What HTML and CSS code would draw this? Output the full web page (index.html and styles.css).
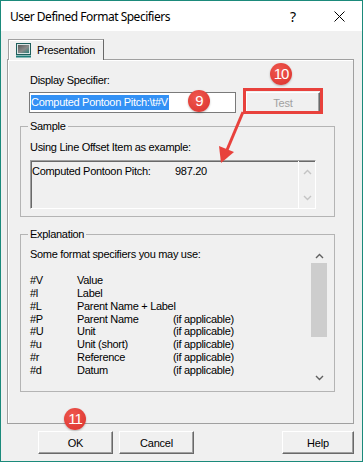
FILE: index.html
```html
<!DOCTYPE html>
<html lang="en">
<head>
<meta charset="utf-8"/>
<title>User Defined Format Specifiers</title>
<link rel="stylesheet" href="styles.css">
</head>
<body>
<div class="window">
<div class="titlebar">
<span class="title">User Defined Format Specifiers</span>
<span class="caption-btn">?</span>
<span class="caption-btn"><svg width="11" height="11" viewBox="0 0 11 11"><path d="M0.5 0.5 L10.5 10.5 M10.5 0.5 L0.5 10.5" stroke="#000" stroke-width="1" fill="none"/></svg></span>
</div>
<div class="tabs">
<div class="tab">
<svg class="tab-icon" width="15" height="15" viewBox="0 0 15 15">
<defs><linearGradient id="scr" x1="0" y1="0" x2="1" y2="1"><stop offset="0" stop-color="#5a5a5a"/><stop offset="0.55" stop-color="#8a8a8a"/><stop offset="1" stop-color="#2f7f78"/></linearGradient></defs>
<rect x="0.5" y="0.5" width="14" height="11" fill="#d8e4e4" stroke="#1e5e5c"/>
<rect x="2" y="2" width="11" height="8" fill="url(#scr)"/>
<rect x="0" y="12.5" width="15" height="2" fill="#1f7f7a"/>
</svg>
<span>Presentation</span>
</div>
</div>
<div class="panel">
<div class="field-label">Display Specifier:</div>
<div class="spec-row">
<div class="spec-input"><span class="sel">Computed Pontoon Pitch:\t#V</span></div>
<button class="btn btn-test" disabled>Test</button>
</div>
<fieldset class="group group-sample">
<legend>Sample</legend>
<div class="hint">Using Line Offset Item as example:</div>
<div class="sample-box">
<div class="sample-text"><span class="sample-name">Computed Pontoon Pitch:</span><span>987.20</span></div>
<div class="scroll scroll-off">
<svg width="9" height="6" viewBox="0 0 9 6"><path d="M1 5 L4.5 1.5 L8 5" stroke="#c4c4c4" stroke-width="1.4" fill="none"/></svg>
<svg width="9" height="6" viewBox="0 0 9 6"><path d="M1 1 L4.5 4.5 L8 1" stroke="#c4c4c4" stroke-width="1.4" fill="none"/></svg>
</div>
</div>
</fieldset>
<fieldset class="group group-explain">
<legend>Explanation</legend>
<div class="explain-box">
<div class="explain-text">
<div class="intro">Some format specifiers you may use:</div>
<div class="spec-list">
<span>#V</span><span>Value</span><span></span>
<span>#l</span><span>Label</span><span></span>
<span>#L</span><span>Parent Name + Label</span><span></span>
<span>#P</span><span>Parent Name</span><span>(if applicable)</span>
<span>#U</span><span>Unit</span><span>(if applicable)</span>
<span>#u</span><span>Unit (short)</span><span>(if applicable)</span>
<span>#r</span><span>Reference</span><span>(if applicable)</span>
<span>#d</span><span>Datum</span><span>(if applicable)</span>
</div>
</div>
<div class="scroll scroll-on">
<svg width="9" height="6" viewBox="0 0 9 6"><path d="M1 5 L4.5 1.5 L8 5" stroke="#606060" stroke-width="1.4" fill="none"/></svg>
<div class="thumb"></div>
<svg width="9" height="6" viewBox="0 0 9 6"><path d="M1 1 L4.5 4.5 L8 1" stroke="#606060" stroke-width="1.4" fill="none"/></svg>
</div>
</div>
</fieldset>
</div>
<div class="buttons">
<button class="btn btn-ok">OK</button>
<button class="btn btn-cancel">Cancel</button>
<button class="btn btn-help">Help</button>
</div>
<div class="mark mark-9">9</div>
<div class="mark mark-10">10</div>
<div class="mark mark-11">11</div>
<div class="focus-box"></div>
<svg class="arrow" width="40" height="60" viewBox="210 108 40 60">
<line x1="243" y1="112" x2="227" y2="150" stroke="#e8413c" stroke-width="3"/>
<polygon points="221,163 234,152 219,146" fill="#e8413c"/>
</svg>
</div>
</body>
</html>
```
FILE: styles.css
```css
body {
    margin: 0;
    font-family: "Liberation Sans", Arial, sans-serif;
    font-size: 11px;
    letter-spacing: -0.3px;
    color: #000;
}
.window {
    position: relative;
    width: 363px;
    height: 462px;
    box-sizing: border-box;
    border: 1px solid #1b8a7b;
    background: #f0f0f0;
}
.titlebar {
    height: 30px;
    background: #fff;
    display: flex;
    align-items: center;
}
.title {
    flex: 1;
    margin-left: 9px;
    font-family: "Noto Sans", sans-serif;
    font-size: 12px;
    letter-spacing: -0.5px;
}
.caption-btn {
    width: 46px;
    height: 30px;
    display: flex;
    justify-content: center;
    align-items: center;
    font-family: "Noto Sans", sans-serif;
    font-size: 14px;
}
.tabs {
    padding: 8px 0 0 7px;
}
.tab {
    position: relative;
    z-index: 1;
    width: 96px;
    height: 21px;
    margin-bottom: -1px;
    box-sizing: border-box;
    display: flex;
    align-items: center;
    padding-left: 7px;
    background: #f0f0f0;
    border: 1px solid #a0a0a0;
    border-bottom: none;
    border-right-color: #696969;
    box-shadow: inset 1px 1px #fff;
}
.tab-icon {
    margin-right: 6px;
}
.panel {
    margin-left: 6px;
    width: 347px;
    height: 365px;
    box-sizing: border-box;
    border: 1px solid #a0a0a0;
    box-shadow: inset 1px 1px #fff;
}
.field-label {
    margin: 14px 0 0 22px;
    line-height: 13px;
}
.spec-row {
    display: flex;
    margin-top: 5px;
    padding-left: 21px;
}
.spec-input {
    width: 207px;
    height: 21px;
    box-sizing: border-box;
    background: #fff;
    border: 1px solid #7a7a7a;
    padding: 2px 0 0 1px;
    overflow: hidden;
    white-space: nowrap;
}
.sel {
    display: inline-block;
    background: #3391f5;
    color: #fff;
    line-height: 15px;
    padding-right: 1px;
}
.btn {
    font-family: "Liberation Sans", Arial, sans-serif;
    font-size: 11px;
    letter-spacing: -0.2px;
    color: #000;
    height: 23px;
    box-sizing: border-box;
    background: #f0f0f0;
    border: 1px solid;
    border-color: #fff #696969 #696969 #fff;
    box-shadow: inset -1px -1px #a0a0a0;
    padding: 0;
}
.btn-test {
    margin-left: 10px;
    width: 74px;
    height: 21px;
    color: #a0a0a0;
}
.group {
    margin: 0 0 0 12px;
    width: 315px;
    box-sizing: border-box;
    border: 1px solid #b4b4b4;
    padding: 0;
    min-inline-size: 0;
}
.group legend {
    margin-left: 7px;
    padding: 0 2px;
    line-height: 13px;
}
.group-sample {
    margin-top: 7px;
    padding: 7px 0 7px 0;
}
.hint {
    margin-left: 9px;
    line-height: 14px;
}
.sample-box {
    display: flex;
    margin: 6px 0 0 9px;
    width: 286px;
    height: 49px;
    box-sizing: border-box;
    border: 1px solid;
    border-color: #a0a0a0 #fff #fff #a0a0a0;
    box-shadow: inset 1px 1px #696969;
}
.sample-text {
    flex: 1;
    display: flex;
    padding: 4px 0 0 1px;
    line-height: 13px;
}
.sample-name {
    width: 143px;
}
.scroll {
    width: 16px;
    display: flex;
    flex-direction: column;
    align-items: center;
}
.scroll-off {
    border-left: 1px solid #fff;
    justify-content: space-between;
    padding: 8px 0 7px;
}
.group-explain {
    margin-top: 11px;
    padding: 2px 0 5px 0;
}
.explain-box {
    display: flex;
    margin-left: 7px;
    width: 299px;
    height: 143px;
}
.explain-text {
    flex: 1;
    padding: 5px 0 0 2px;
    line-height: 12.9px;
    white-space: nowrap;
}
.intro {
    margin-bottom: 12.9px;
}
.spec-list {
    display: grid;
    grid-template-columns: 47px 96px auto;
}
.scroll-on {
    padding-top: 10px;
}
.thumb {
    width: 16px;
    height: 74px;
    margin-top: 4px;
    background: #cdcdcd;
}
.scroll-on svg:last-child {
    margin-top: 38px;
}
.buttons {
    display: flex;
    margin-top: 7px;
    padding: 0 8px 0 37px;
}
.btn-ok,
.btn-cancel {
    width: 75px;
}
.btn-cancel {
    margin-left: 6px;
}
.btn-help {
    width: 72px;
    margin-left: auto;
}
.mark {
    position: absolute;
    width: 22px;
    height: 22px;
    border-radius: 50%;
    background: radial-gradient(circle at 40% 35%, #f0594f, #d9302c);
    color: #fff;
    font-size: 15px;
    line-height: 22px;
    text-align: center;
    letter-spacing: -1px;
    box-shadow: 0 1px 2px rgba(0, 0, 0, 0.25);
}
.mark-9 {
    left: 187px;
    top: 89px;
}
.mark-10 {
    left: 269px;
    top: 62px;
}
.mark-11 {
    left: 63px;
    top: 407px;
}
.focus-box {
    position: absolute;
    left: 242px;
    top: 87px;
    width: 80px;
    height: 26px;
    box-sizing: border-box;
    border: 3px solid #e8413c;
}
.arrow {
    position: absolute;
    left: 209px;
    top: 107px;
}
```
